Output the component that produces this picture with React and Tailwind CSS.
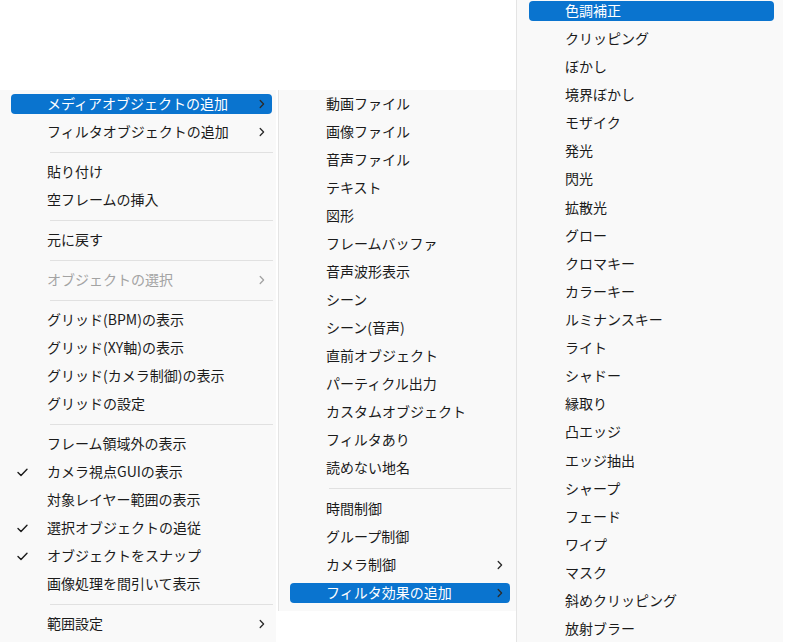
import React from "react";

const FONT = { fontFamily: '"Noto Sans CJK JP", "Noto Sans", sans-serif' };

function Check() {
  return (
    <svg width="11" height="9" viewBox="0 0 11 9" fill="none">
      <path d="M1 4.6 L4 7.6 L10 1.2" stroke="#1b1b1b" strokeWidth="1.4" strokeLinecap="round" strokeLinejoin="round" />
    </svg>
  );
}

function Arrow({ color }) {
  return (
    <svg width="6" height="10" viewBox="0 0 6 10" fill="none">
      <path d="M1.2 1.5 L4.6 5 L1.2 8.5" stroke={color} strokeWidth="1.3" strokeLinecap="round" strokeLinejoin="round" />
    </svg>
  );
}

function Row({ label, check, arrow, active, disabled, inset, tall }) {
  const textColor = active ? "text-white" : disabled ? "text-[#a3a3a3]" : "text-[#1b1b1b]";
  return (
    <div className={`${tall ? "h-[29px]" : "h-[28px]"} flex items-center`}>
      <div
        className={`${inset} h-[20px] flex-1 rounded-[4px] flex items-center ${active ? "bg-[#0a74cf]" : ""}`}
      >
        <div className="w-[36px] h-full flex items-center pl-[6px]">{check ? <Check /> : null}</div>
        <div className={`flex-1 text-[14px] leading-[20px] pb-[2px] whitespace-nowrap ${textColor}`}>{label}</div>
        {arrow ? (
          <div className="pr-[7px] flex items-center">
            <Arrow color={disabled ? "#a3a3a3" : "#2b2b2b"} />
          </div>
        ) : null}
      </div>
    </div>
  );
}

function Sep({ cls }) {
  return (
    <div className={`h-[12px] flex items-center ${cls}`}>
      <div className="h-px flex-1 bg-[#e1e1e1]" />
    </div>
  );
}

const p1 = "ml-[11px] mr-[4px]";
const p2 = "ml-[11px] mr-[6px]";
const p3 = "ml-[12px] mr-[9px]";

const filters = [
  "色調補正", "クリッピング", "ぼかし", "境界ぼかし", "モザイク", "発光", "閃光", "拡散光", "グロー",
  "クロマキー", "カラーキー", "ルミナンスキー", "ライト", "シャドー", "縁取り", "凸エッジ", "エッジ抽出",
  "シャープ", "フェード", "ワイプ", "マスク", "斜めクリッピング", "放射ブラー",
];

const media = [
  "動画ファイル", "画像ファイル", "音声ファイル", "テキスト", "図形", "フレームバッファ", "音声波形表示",
  "シーン", "シーン(音声)", "直前オブジェクト", "パーティクル出力", "カスタムオブジェクト", "フィルタあり", "読めない地名",
];

export default function App() {
  return (
    <div className="w-[792px] h-[642px] bg-white overflow-hidden flex items-start" style={FONT}>
      {/* Panel 1 */}
      <div className="w-[276px] mt-[90px] h-[560px] bg-[#f9f9f9] shrink-0">
        <Row label="メディアオブジェクトの追加" arrow active inset={p1} />
        <Row label="フィルタオブジェクトの追加" arrow inset={p1} />
        <Sep cls="ml-[50px] mr-[3px]" />
        <Row label="貼り付け" inset={p1} />
        <Row label="空フレームの挿入" inset={p1} />
        <Sep cls="ml-[50px] mr-[3px]" />
        <Row label="元に戻す" inset={p1} />
        <Sep cls="ml-[50px] mr-[3px]" />
        <Row label="オブジェクトの選択" arrow disabled inset={p1} />
        <Sep cls="ml-[50px] mr-[3px]" />
        <Row label="グリッド(BPM)の表示" inset={p1} />
        <Row label="グリッド(XY軸)の表示" inset={p1} />
        <Row label="グリッド(カメラ制御)の表示" inset={p1} />
        <Row label="グリッドの設定" inset={p1} />
        <Sep cls="ml-[50px] mr-[3px]" />
        <Row label="フレーム領域外の表示" inset={p1} />
        <Row label="カメラ視点GUIの表示" check inset={p1} />
        <Row label="対象レイヤー範囲の表示" inset={p1} />
        <Row label="選択オブジェクトの追従" check inset={p1} />
        <Row label="オブジェクトをスナップ" check inset={p1} />
        <Row label="画像処理を間引いて表示" inset={p1} />
        <Sep cls="ml-[50px] mr-[3px]" />
        <Row label="範囲設定" arrow inset={p1} />
      </div>

      {/* Panel 2 */}
      <div className="w-[238px] ml-[2px] mt-[90px] pb-[4px] bg-[#f9f9f9] border-l border-[#e4e4e4] shrink-0">
        {media.map((m) => (
          <Row key={m} label={m} inset={p2} />
        ))}
        <div className="h-[13px] flex items-center ml-[50px] mr-[5px]">
          <div className="h-px flex-1 bg-[#e1e1e1]" />
        </div>
        <Row label="時間制御" inset={p2} />
        <Row label="グループ制御" inset={p2} />
        <Row label="カメラ制御" arrow inset={p2} />
        <Row label="フィルタ効果の追加" arrow active inset={p2} />
      </div>

      {/* Panel 3 */}
      <div className="w-[267px] mt-[-3px] h-[650px] bg-[#f9f9f9] border-l border-[#e4e4e4] shrink-0">
        {filters.map((f, i) => (
          <Row key={f} label={f} active={i === 0} inset={p3} tall={i === 7 || i === 16} />
        ))}
      </div>
    </div>
  );
}
